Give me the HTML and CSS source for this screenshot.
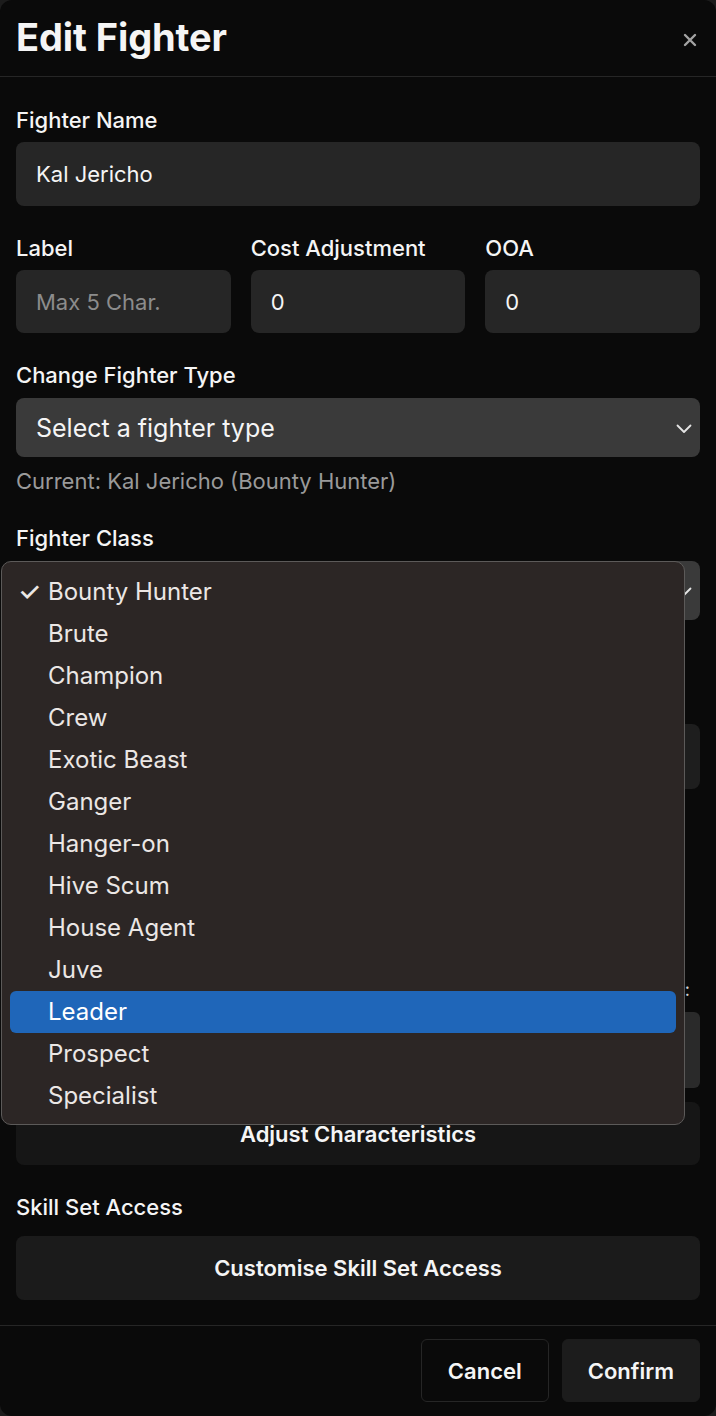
FILE: index.html
```html
<!DOCTYPE html>
<html lang="en">
  <head>
    <meta charset="UTF-8" />
    <meta name="viewport" content="width=device-width, initial-scale=1.0" />
    <title>Edit Fighter</title>
    <link rel="stylesheet" href="styles.css">
  </head>
  <body>
    <main class="modal">
      <header class="modal-head">
        <h1>Edit Fighter</h1>
        <button class="close" aria-label="Close">
          <svg width="14" height="14" viewBox="0 0 14 14">
            <path d="M2 2 L12 12 M12 2 L2 12" stroke="#a3a3a3" stroke-width="2.4" stroke-linecap="round" />
          </svg>
        </button>
      </header>

      <section class="modal-body">
        <div class="field">
          <label class="label">Fighter Name</label>
          <input class="input" type="text" value="Kal Jericho">
        </div>

        <div class="row">
          <div class="cell">
            <label class="label">Label</label>
            <input class="input" type="text" placeholder="Max 5 Char.">
          </div>
          <div class="cell">
            <label class="label">Cost Adjustment</label>
            <input class="input" type="text" value="0">
          </div>
          <div class="cell">
            <label class="label">OOA</label>
            <input class="input" type="text" value="0">
          </div>
        </div>

        <div class="field with-hint">
          <label class="label">Change Fighter Type</label>
          <div class="select">
            <span>Select a fighter type</span>
            <svg class="chevron" width="16" height="10" viewBox="0 0 16 10">
              <path d="M1.5 1.5 L8 8 L14.5 1.5" fill="none" stroke="#e5e5e5" stroke-width="1.8" stroke-linecap="round" stroke-linejoin="round" />
            </svg>
          </div>
          <p class="hint">Current: Kal Jericho (Bounty Hunter)</p>
        </div>

        <div class="field with-hint">
          <label class="label">Fighter Class</label>
          <div class="select-wrap">
            <div class="select">
              <span></span>
              <svg class="chevron" width="16" height="10" viewBox="0 0 16 10">
                <path d="M1.5 1.5 L8 8 L14.5 1.5" fill="none" stroke="#e5e5e5" stroke-width="1.8" stroke-linecap="round" stroke-linejoin="round" />
              </svg>
            </div>
            <ul class="menu">
              <li class="opt checked">Bounty Hunter</li>
              <li class="opt">Brute</li>
              <li class="opt">Champion</li>
              <li class="opt">Crew</li>
              <li class="opt">Exotic Beast</li>
              <li class="opt">Ganger</li>
              <li class="opt">Hanger-on</li>
              <li class="opt">Hive Scum</li>
              <li class="opt">House Agent</li>
              <li class="opt">Juve</li>
              <li class="opt active">Leader</li>
              <li class="opt">Prospect</li>
              <li class="opt">Specialist</li>
            </ul>
          </div>
          <div class="hint"></div>
        </div>

        <!-- covered by the open class menu -->
        <div class="field">
          <div class="label"></div>
          <div class="select dim"></div>
        </div>

        <div class="field">
          <div class="label"></div>
          <div class="hint"></div>
          <div class="stat-head"><span>:</span></div>
          <div class="stats"></div>
          <button class="wide-btn">Adjust Characteristics</button>
        </div>

        <div class="field last">
          <label class="label">Skill Set Access</label>
          <button class="wide-btn">Customise Skill Set Access</button>
        </div>
      </section>

      <footer class="modal-foot">
        <button class="btn ghost">Cancel</button>
        <button class="btn">Confirm</button>
      </footer>
    </main>
  </body>
</html>
```

FILE: styles.css
```css
body {
  margin: 0;
  background: #1c1c1c;
  font-family: Inter, "Liberation Sans", sans-serif;
  color: #f5f5f5;
}
main {
  width: 716px;
  height: 1416px;
  background: #0a0a0a;
  border-radius: 12px;
  display: flex;
  flex-direction: column;
  overflow: hidden;
}
button {
  font-family: inherit;
  color: inherit;
  cursor: pointer;
}
.modal-head {
  height: 76px;
  border-bottom: 1px solid #262626;
  display: flex;
  align-items: center;
  justify-content: space-between;
  padding: 0 19px 0 16px;
}
.modal-head h1 {
  margin: 0 0 2px;
  font-size: 38px;
  font-weight: 700;
  letter-spacing: -0.1px;
}
.close {
  background: none;
  border: none;
  padding: 0;
  margin-top: 4px;
  display: flex;
}
.modal-body {
  flex: 1;
  padding: 31px 16px 0;
}
.field {
  margin-bottom: 30px;
}
.field.with-hint {
  margin-bottom: 33px;
}
.label {
  display: block;
  height: 24px;
  line-height: 24px;
  font-size: 22px;
  font-weight: 500;
  margin-bottom: 10px;
}
.input {
  box-sizing: border-box;
  width: 100%;
  height: 64px;
  background: #262626;
  border: none;
  border-radius: 8px;
  padding: 0 20px;
  font-family: inherit;
  font-size: 22px;
  color: #f5f5f5;
  outline: none;
}
.input::placeholder {
  color: #8c8c8c;
}
.row {
  display: grid;
  grid-template-columns: 1fr 1fr 1fr;
  gap: 20px;
  margin-bottom: 30px;
}
.row .input {
  height: 63px;
}
.select {
  box-sizing: border-box;
  height: 59px;
  margin-top: 11px;
  background: #3a3a3a;
  border-radius: 8px;
  padding: 0 8px 0 20px;
  display: flex;
  align-items: center;
  justify-content: space-between;
  font-size: 25px;
}
.select.dim {
  height: 65px;
  background: #1e1e1e;
}
.chevron {
  margin-top: 2px;
}
.hint {
  margin: 12px 0 0;
  height: 24px;
  line-height: 24px;
  font-size: 22px;
  color: #9a9a9a;
}
.select-wrap {
  position: relative;
}
.menu {
  position: absolute;
  top: 0;
  left: -15px;
  width: 684px;
  box-sizing: border-box;
  margin: 0;
  padding: 9px 8px 7px;
  list-style: none;
  background: #2c2625;
  border: 1px solid #5c5a59;
  border-radius: 10px;
  z-index: 10;
}
.opt {
  height: 42px;
  line-height: 42px;
  padding-left: 38px;
  border-radius: 6px;
  font-size: 24px;
  color: #ebe7e5;
  position: relative;
}
.opt.checked::before {
  content: "\2713";
  position: absolute;
  left: 8px;
  font-size: 26px;
  font-weight: 500;
}
.opt.active {
  background: #1f66b9;
  color: #ffffff;
}
.stat-head {
  display: flex;
  justify-content: flex-end;
  margin-top: 99px;
  padding-right: 10px;
  height: 24px;
  line-height: 24px;
  font-size: 18px;
  color: #d4d4d4;
}
.stats {
  height: 76px;
  margin-top: 10px;
  background: #2a2a2a;
  border-radius: 6px;
}
.wide-btn {
  display: block;
  width: 100%;
  height: 63px;
  margin-top: 14px;
  background: #161616;
  border: none;
  border-radius: 8px;
  font-size: 22px;
  font-weight: 600;
}
.field.last {
  margin-bottom: 0;
}
.field.last .label {
  margin-bottom: 17px;
}
.field.last .wide-btn {
  height: 64px;
  margin-top: 0;
  background: #1b1b1b;
}
.modal-foot {
  border-top: 1px solid #262626;
  padding: 13px 16px 14px;
  display: flex;
  justify-content: flex-end;
  gap: 13px;
}
.btn {
  height: 63px;
  padding: 0 25px;
  background: #1c1c1c;
  border: 1px solid #1c1c1c;
  border-radius: 6px;
  font-size: 22px;
  font-weight: 600;
}
.btn.ghost {
  background: #0a0a0a;
  border-color: #262626;
  padding: 0 26px;
}
```
